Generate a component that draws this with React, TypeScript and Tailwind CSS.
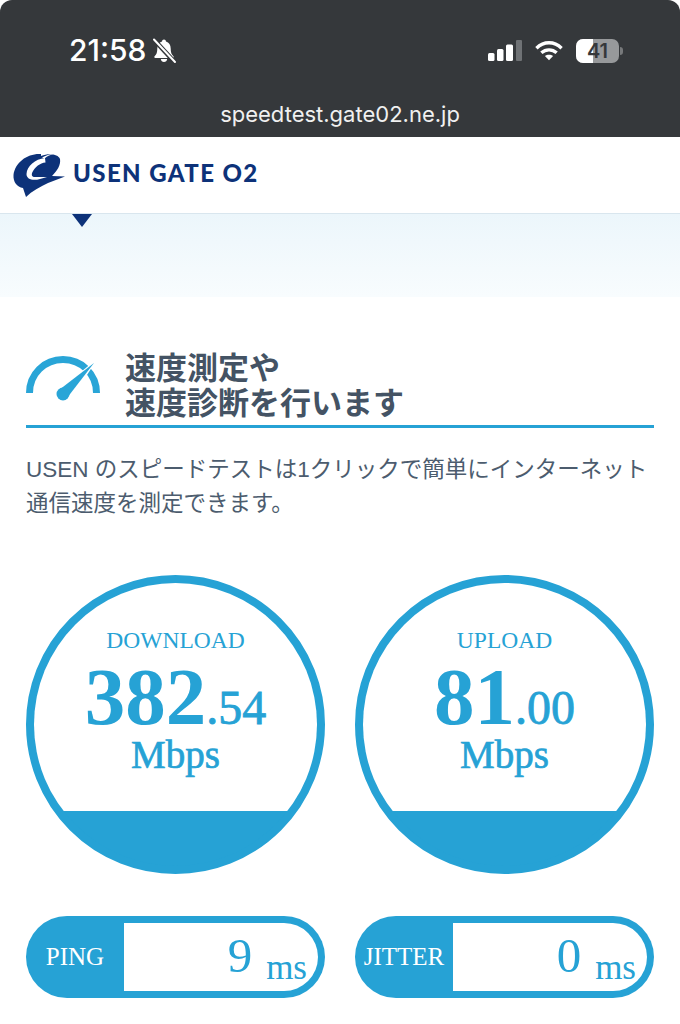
const serif = "font-['Liberation_Serif','Noto_Serif_CJK_JP',serif]";

function Bell() {
  return (
    <svg width="26" height="26" viewBox="0 0 26 26" fill="none">
      <path d="M13 1.500c-1.200 0-1.900.8-2 1.900C8 4.300 6.300 7 6.300 10.400c0 3.800-.8 6-2.700 7.800-.7.7-.3 1.700.7 1.700h17.400c1 0 1.400-1 .7-1.700-1.900-1.800-2.700-4-2.700-7.800 0-3.400-1.700-6.100-4.700-7-.1-1.100-.8-1.900-2-1.900z" fill="#fff" />
      <path d="M9.800 21h6.400c-.2 1.800-1.500 3-3.200 3s-3-1.200-3.200-3z" fill="#fff" />
      <path d="M2.800 1.500 24 24.500" stroke="#35383b" strokeWidth="4.600" />
      <path d="M3 1.500 24 24" stroke="#fff" strokeWidth="2" strokeLinecap="round" />
    </svg>
  );
}

function Signal() {
  return (
    <svg width="34" height="21" viewBox="0 0 34 21">
      <rect x="0" y="13" width="6.500" height="8" rx="1.500" fill="#fff" />
      <rect x="9" y="9" width="6.500" height="12" rx="1.500" fill="#fff" />
      <rect x="18" y="4.500" width="7" height="16.500" rx="1.500" fill="#fff" />
      <rect x="28" y="0" width="6" height="21" rx="1" fill="#6f7275" />
    </svg>
  );
}

function Wifi() {
  return (
    <svg width="28" height="21" viewBox="0 0 30 22" fill="none" stroke="#fff" strokeWidth="3.600">
      <path d="M1.500 8.500C9.500 .8 20.500 .8 28.500 8.500" />
      <path d="M6.800 13.500c4.800-4.300 11.600-4.300 16.400 0" />
      <path d="M15 21.500 10.600 17c2.500-2.100 6.300-2.100 8.800 0z" fill="#fff" stroke="none" />
    </svg>
  );
}

function Battery() {
  return (
    <div className="flex items-center">
      <div className="relative flex h-[24px] w-[43px] items-center justify-center overflow-hidden rounded-[7px] bg-[#97999b]">
        <div className="absolute inset-y-0 left-0 w-[17px] bg-white" />
        <span className="relative text-[20px] font-semibold leading-none text-[#35383b] font-['Inter',sans-serif]">41</span>
      </div>
      <div className="ml-[1px] h-[8px] w-[3px] rounded-r-full bg-[#77797b]" />
    </div>
  );
}

function Logo() {
  return (
    <svg width="64" height="50" viewBox="0 0 64 50">
      <path fill="#0d3279" d="M33 4C20 3 7 12 5.500 25 5 32 9 37 15 38l3 9c6-6 14-10 22-14l17-6.500-13-.5c5-5 9-11 8-17-2-5-11-6-19-3z" />
      <path fill="#fff" d="M37 8C27 9 19 16 18.500 24c0 5.500 6.500 7 13.500 5l7-2H27c-3 0-4-2-2.500-5C27 17 32 13 37.500 12.500z" />
      <path fill="#fff" d="M36.500 8.500c3-2.500 6-3.800 9.500-4.500-3.500 0-7.500 1-12 3.500z" />
    </svg>
  );
}

function Gauge() {
  return (
    <svg width="74" height="46" viewBox="0 0 74 46" fill="none">
      <path d="M3.500 37C3.500 18 18.500 3.500 37 3.500S70.500 18 70.500 37" stroke="#29a5d7" strokeWidth="7" />
      <path d="M34 33 72 2 46 42z" fill="#fff" />
      <path d="M33 34 68 7 41 42z" fill="#29a5d7" />
      <circle cx="37" cy="38" r="6.500" fill="#29a5d7" />
    </svg>
  );
}

function Meter({ label, whole, dec }: { label: string; whole: string; dec: string }) {
  return (
    <div className={`flex h-[299px] w-[299px] flex-col overflow-hidden rounded-full border-[8px] border-[#26a2d5] bg-[#26a2d5] text-[#26a2d5] ${serif}`}>
      <div className="flex h-[228px] flex-col items-center bg-white pt-[43px]">
        <div className="text-[23.500px] leading-[28px]">{label}</div>
        <div className="mt-[11px] flex h-[64px] items-baseline leading-[64px]">
          <span className="text-[81px] font-bold">{whole}</span>
          <span className="text-[48px] [-webkit-text-stroke:0.800px_#26a2d5]">.{dec}</span>
        </div>
        <div className="mt-[4px] text-[39px] leading-[44px] [-webkit-text-stroke:0.700px_#26a2d5]">Mbps</div>
      </div>
    </div>
  );
}

function Pill({ label, value }: { label: string; value: string }) {
  return (
    <div className={`flex h-[82px] w-[299px] overflow-hidden rounded-full bg-[#26a2d5] text-[#26a2d5] ${serif}`}>
      <div className="flex w-[98px] shrink-0 items-center justify-center text-[25px] text-white">{label}</div>
      <div className="my-[7px] mr-[7px] flex flex-1 items-end justify-end rounded-r-full bg-white pr-[11px]">
        <span className="mb-[5px] mr-[14px] text-[49px] leading-[60px]">{value}</span>
        <span className="mb-[3px] text-[35px] leading-[40px]">ms</span>
      </div>
    </div>
  );
}

export default function App() {
  return (
    <div className="h-[1024px] w-[680px] overflow-hidden bg-white font-['Liberation_Sans','Noto_Sans_CJK_JP',sans-serif]">
      <div className="h-[137px] rounded-t-[12px] bg-[#35383b] text-white">
        <div className="flex h-[104px] items-center justify-between pb-[3px] pl-[69px] pr-[57px]">
          <div className="flex items-center gap-[5px] text-[30px] font-medium font-['Inter',sans-serif]">
            <span>21:58</span>
            <Bell />
          </div>
          <div className="flex items-center gap-[13px]">
            <Signal />
            <Wifi />
            <Battery />
          </div>
        </div>
        <div className="text-center text-[22px] leading-[20px] text-[#f0f0f0] font-['Inter',sans-serif]">speedtest.gate02.ne.jp</div>
      </div>

      <div className="flex h-[77px] items-center gap-[1px] border-b border-[#d9e6ee] pl-[8px]">
        <Logo />
        <span className="pb-[4px] text-[24px] font-black tracking-[1.400px] text-[#0d3279] font-['Lato',sans-serif]">USEN GATE O2</span>
      </div>

      <div className="h-[83px] bg-gradient-to-b from-[#ecf6fb] to-[#f8fcfe] pl-[72px]">
        <svg width="20" height="16" viewBox="0 0 20 16"><path d="M0 0h20L10 13z" fill="#0d3279" /></svg>
      </div>

      <div className="px-[26px] pt-[53px]">
        <div className="flex h-[78px] items-start gap-[25px] border-b-[3px] border-[#26a2d5]">
          <div className="pt-[6px]"><Gauge /></div>
          <h1 className="pt-[1px] text-[31px] font-bold leading-[35px] text-[#445364]">速度測定や<br />速度診断を行います</h1>
        </div>
        <p className="mt-[25px] text-[22.500px] leading-[34px] text-[#4c5c6e]">USEN のスピードテストは1クリックで簡単にインターネット<br />通信速度を測定できます。</p>

        <div className="mt-[54px] flex gap-[30px]">
          <Meter label="DOWNLOAD" whole="382" dec="54" />
          <Meter label="UPLOAD" whole="81" dec="00" />
        </div>

        <div className="mt-[42px] flex gap-[30px]">
          <Pill label="PING" value="9" />
          <Pill label="JITTER" value="0" />
        </div>
      </div>
    </div>
  );
}
